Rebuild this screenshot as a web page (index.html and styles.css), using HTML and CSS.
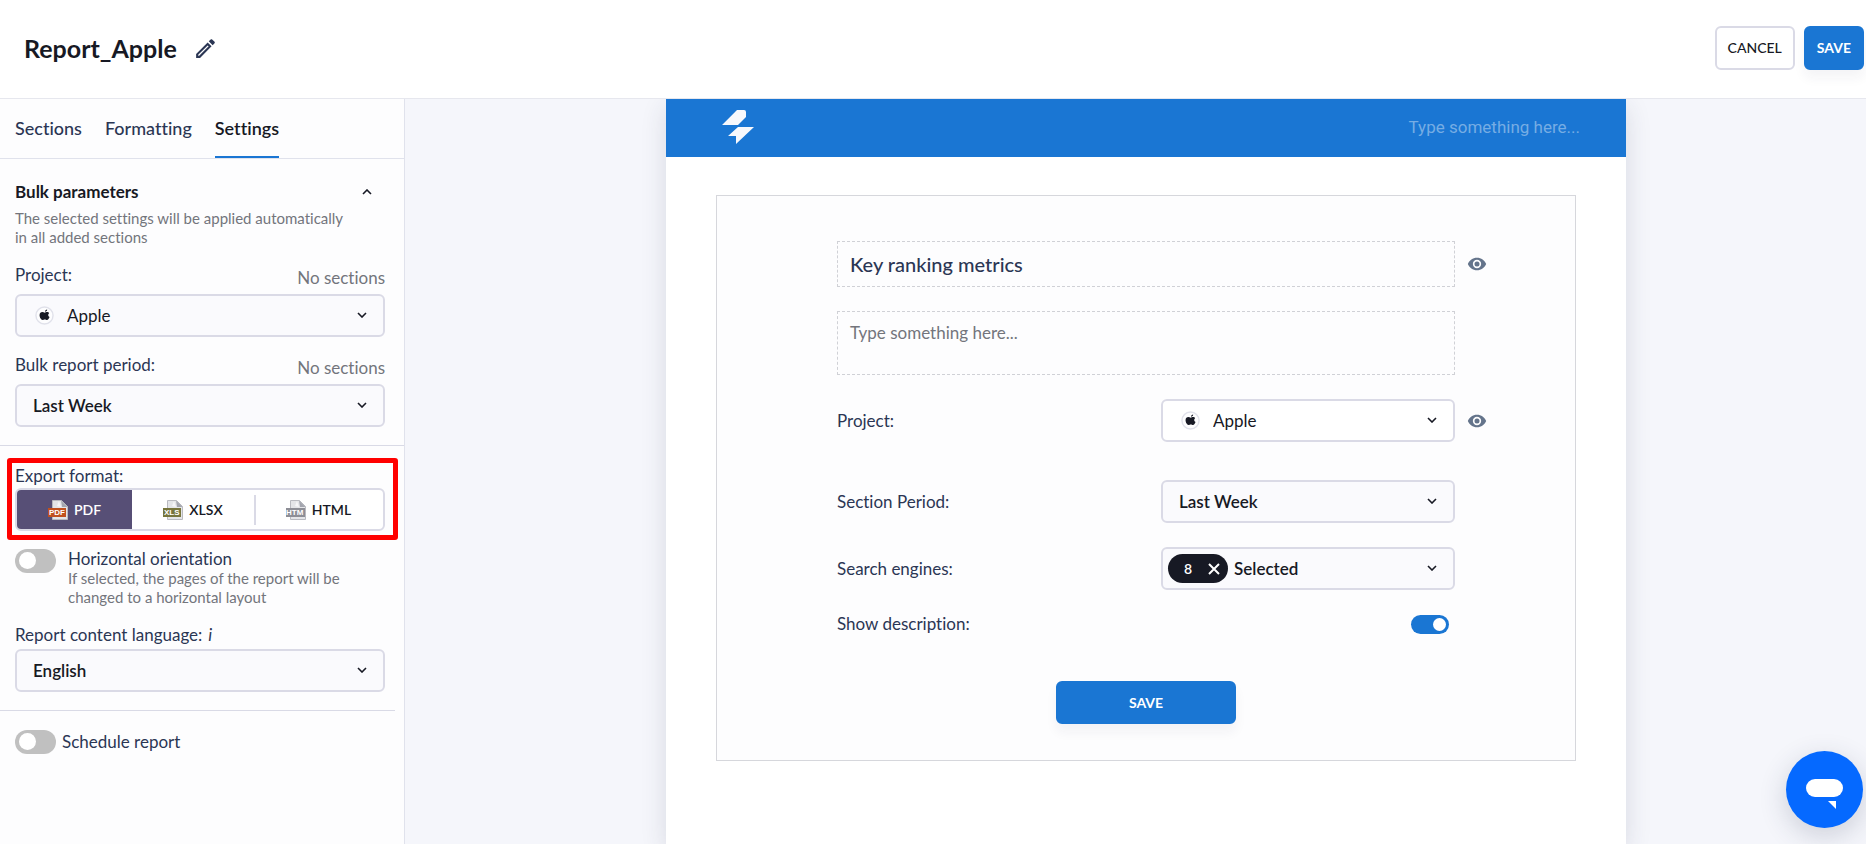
FILE: index.html
```html
<!doctype html>
<html lang="en">
    <head>
        <meta charset="utf-8" />
        <meta name="viewport" content="width=device-width" />
        <title>Report_Apple</title>
        <link rel="stylesheet" href="styles.css">
    </head>
    <body>
        <svg class="sprite" aria-hidden="true">
            <symbol id="chevron" viewBox="0 0 10 6">
                <path d="M1 1l4 4 4-4" fill="none" stroke="#171924" stroke-width="1.600" />
            </symbol>
            <symbol id="eye" viewBox="0 0 24 24">
                <path fill="#64748b" d="M12 4.5C7 4.5 2.7 7.6 1 12c1.700 4.400 6 7.500 11 7.500s9.300-3.100 11-7.500c-1.700-4.400-6-7.500-11-7.500zM12 17a5 5 0 1 1 0-10 5 5 0 0 1 0 10zm0-8a3 3 0 1 0 0 6 3 3 0 0 0 0-6z" />
            </symbol>
            <symbol id="apple" viewBox="0 0 20 20">
                <circle cx="10" cy="10" r="9" fill="#fdfdfe" stroke="#e0e1ea" stroke-width="1.500" />
                <path fill="#171924" d="M12.800 3.700c.1 1.300-1 2.400-2.300 2.400-.1-1.200 1-2.300 2.300-2.400zM14.900 7.700c-1.500.9-1.300 3.200.4 3.900-.5 1.500-1.500 3.100-2.700 3.100-.8 0-1.300-.5-2.300-.5s-1.500.5-2.300.5C6.300 14.700 4.800 12 4.800 9.800c0-2.200 1.400-3.400 2.900-3.400.9 0 1.800.6 2.500.6s1.600-.7 2.800-.6c.8 0 1.500.5 1.900 1.300z" />
            </symbol>
            <symbol id="sheet" viewBox="0 0 20 20">
                <path fill="#e4e5e8" stroke="#b9bac0" stroke-width="1" d="M4.500.5h9l6 6v13h-15z" />
                <path fill="#a3a5ae" d="M13 .5l6.500 6.500H14z" />
                <path fill="#f6f6f8" d="M11 1l2 6-4-1z" />
            </symbol>
        </svg>

        <header class="topbar">
            <h1>Report_Apple</h1>
            <button class="icon_button" aria-label="Rename report">
                <svg width="25" height="25" viewBox="0 0 24 24">
                    <path fill="#2b3654" d="M14.060 9l.94.94L5.920 19H5v-.92L14.060 9m3.600-6c-.25 0-.51.1-.7.29l-1.830 1.830 3.750 3.750 1.830-1.830c.39-.39.39-1.040 0-1.410l-2.340-2.340c-.2-.2-.45-.29-.71-.29m-3.600 3.190L3 17.250V21h3.750L17.810 9.940l-3.750-3.750z" />
                </svg>
            </button>
            <div class="actions">
                <button class="button">CANCEL</button>
                <button class="button primary">SAVE</button>
            </div>
        </header>

        <div class="layout">
            <aside class="sidebar">
                <nav class="tabs">
                    <a href="#sections">Sections</a>
                    <a href="#formatting">Formatting</a>
                    <a href="#settings" class="active">Settings</a>
                </nav>

                <section class="group bulk">
                    <div class="group_title">
                        <h2>Bulk parameters</h2>
                        <button class="icon_button" aria-label="Collapse">
                            <svg class="chevron up"><use href="#chevron" /></svg>
                        </button>
                    </div>
                    <p class="hint">The selected settings will be applied automatically in all added sections</p>

                    <div class="field_head">
                        <label for="bulk_project">Project:</label>
                        <span class="note">No sections</span>
                    </div>
                    <div class="select with_icon">
                        <svg class="favicon"><use href="#apple" /></svg>
                        <select id="bulk_project"><option>Apple</option></select>
                        <svg class="chevron"><use href="#chevron" /></svg>
                    </div>

                    <div class="field_head">
                        <label for="bulk_period">Bulk report period:</label>
                        <span class="note">No sections</span>
                    </div>
                    <div class="select">
                        <select id="bulk_period"><option>Last Week</option></select>
                        <svg class="chevron"><use href="#chevron" /></svg>
                    </div>
                </section>

                <section class="group export">
                    <div class="highlighted">
                        <span id="format_label">Export format:</span>
                        <div class="formats" role="group" aria-labelledby="format_label">
                            <button class="format active" aria-pressed="true">
                                <svg width="20" height="20" viewBox="0 0 20 20">
                                    <use href="#sheet" />
                                    <rect y="8" width="18" height="9" fill="#c0501f" />
                                    <text class="file_type" x="1" y="15">PDF</text>
                                </svg>
                                PDF
                            </button>
                            <button class="format" aria-pressed="false">
                                <svg width="20" height="20" viewBox="0 0 20 20">
                                    <use href="#sheet" />
                                    <rect y="8" width="18" height="9" fill="#77753c" />
                                    <text class="file_type" x="1" y="15">XLS</text>
                                </svg>
                                XLSX
                            </button>
                            <button class="format" aria-pressed="false">
                                <svg width="20" height="20" viewBox="0 0 20 20">
                                    <use href="#sheet" />
                                    <rect y="8" width="19" height="9" fill="#8d8e96" />
                                    <text class="file_type" x="0" y="15">HTM</text>
                                </svg>
                                HTML
                            </button>
                        </div>
                    </div>

                    <div class="switch_row">
                        <input type="checkbox" id="horizontal" class="switch" />
                        <div>
                            <label for="horizontal">Horizontal orientation</label>
                            <p class="hint">If selected, the pages of the report will be changed to a horizontal layout</p>
                        </div>
                    </div>

                    <div class="field_head language">
                        <label for="language">Report content language:</label>
                        <em>i</em>
                    </div>
                    <div class="select">
                        <select id="language"><option>English</option></select>
                        <svg class="chevron"><use href="#chevron" /></svg>
                    </div>
                </section>

                <section class="group schedule">
                    <input type="checkbox" id="schedule" class="switch" />
                    <label for="schedule">Schedule report</label>
                </section>
            </aside>

            <main class="canvas">
                <div class="page">
                    <div class="page_header">
                        <svg width="32" height="36" viewBox="0 0 32 36">
                            <path fill="#f7f8fc" d="M15 1h7q2 0 2 2v5l-8 8H0zM16 18h16L14 35v-8H6z" />
                        </svg>
                        <input type="text" aria-label="Header text" placeholder="Type something here..." />
                    </div>
                    <div class="card">
                        <div class="row heading">
                            <input type="text" class="dashed" aria-label="Section title" value="Key ranking metrics" />
                            <button class="icon_button visibility" aria-label="Toggle title">
                                <svg width="20" height="20"><use href="#eye" /></svg>
                            </button>
                        </div>
                        <textarea class="dashed" aria-label="Section text" placeholder="Type something here..."></textarea>
                        <div class="row project">
                            <label for="project">Project:</label>
                            <div class="select with_icon plain">
                                <svg class="favicon"><use href="#apple" /></svg>
                                <select id="project"><option>Apple</option></select>
                                <svg class="chevron"><use href="#chevron" /></svg>
                            </div>
                            <button class="icon_button visibility" aria-label="Toggle project">
                                <svg width="20" height="20"><use href="#eye" /></svg>
                            </button>
                        </div>
                        <div class="row period">
                            <label for="period">Section Period:</label>
                            <div class="select">
                                <select id="period"><option>Last Week</option></select>
                                <svg class="chevron"><use href="#chevron" /></svg>
                            </div>
                        </div>
                        <div class="row engines">
                            <label for="engines">Search engines:</label>
                            <div class="select with_count">
                                <button class="count" aria-label="Clear 8 selected">
                                    8
                                    <svg width="12" height="12" viewBox="0 0 12 12">
                                        <path d="M1 1l10 10M11 1L1 11" stroke="#fff" stroke-width="2" />
                                    </svg>
                                </button>
                                <select id="engines"><option>Selected</option></select>
                                <svg class="chevron"><use href="#chevron" /></svg>
                            </div>
                        </div>
                        <div class="row description">
                            <label for="description">Show description:</label>
                            <input type="checkbox" id="description" class="switch small" checked />
                        </div>
                        <button class="button primary save">SAVE</button>
                    </div>
                </div>
            </main>
        </div>

        <button class="chat" aria-label="Open chat">
            <svg width="37" height="30" viewBox="0 0 37 30">
                <rect width="37" height="18" rx="9" fill="#fff" />
                <path d="M22 22h8v8z" fill="#fff" />
            </svg>
        </button>
    </body>
</html>
```
FILE: styles.css
```css
* {
    box-sizing: border-box;
}
body {
    display: flex;
    flex-direction: column;
    min-height: 100vh;
    margin: 0;
    background: #fff;
    color: #2b3654;
    font: 17px/20px Lato, "Noto Sans", sans-serif;
    font-variant-ligatures: none;
}
h1,
h2,
p {
    margin: 0;
}
button,
input,
select,
textarea {
    margin: 0;
    font: inherit;
    color: inherit;
}
.sprite {
    position: absolute;
    width: 0;
    height: 0;
}
.icon_button {
    display: flex;
    padding: 0;
    border: 0;
    background: none;
}

/* top bar */
.topbar {
    display: flex;
    align-items: center;
    height: 99px;
    padding: 0 2px 2px 24px;
    border-bottom: 1px solid #e6e7ee;
}
.topbar h1 {
    margin-right: 16px;
    color: #171924;
    font-size: 25px;
    line-height: 32px;
    font-weight: 700;
}
.actions {
    display: flex;
    gap: 9px;
    margin-left: auto;
}
.button {
    height: 44px;
    padding: 0 11px;
    border: 2px solid #dadae6;
    border-radius: 6px;
    background: #fff;
    color: #171924;
    font-size: 14px;
    font-weight: 500;
}
.primary {
    border-color: #1a76d3;
    background: #1a76d3;
    color: #fff;
    font-weight: 700;
    box-shadow: 0 8px 12px rgba(30, 40, 80, 0.05);
}

.layout {
    display: flex;
    flex: 1;
}

/* sidebar */
.sidebar {
    width: 405px;
    flex: none;
    border-right: 1px solid #e0e2ec;
    background: #fdfdfe;
}
.tabs {
    display: flex;
    gap: 23px;
    height: 60px;
    padding: 0 15px;
    border-bottom: 1px solid #e0e2ec;
}
.tabs a {
    padding-top: 19px;
    color: inherit;
    font-size: 18px;
    font-weight: 500;
    text-decoration: none;
}
.tabs .active {
    border-bottom: 2px solid #1a76d3;
    color: #171924;
    font-weight: 600;
}
.group {
    padding: 0 19px 0 15px;
}
.bulk {
    padding-top: 23px;
    padding-bottom: 18px;
    border-bottom: 1px solid #d9dae6;
}
.group_title {
    display: flex;
    align-items: center;
    justify-content: space-between;
    padding-right: 13px;
}
.group_title h2 {
    color: #171924;
    font-size: 17px;
    line-height: 20px;
    font-weight: 700;
}
.hint {
    color: #73757c;
    font-size: 15px;
    line-height: 19px;
}
.group_title + .hint {
    max-width: 334px;
    margin: 7px 0 18px;
}
.field_head {
    display: flex;
    justify-content: space-between;
    padding-bottom: 9px;
}
.select + .field_head {
    padding-top: 18px;
}
.note {
    margin: 3px 0 -3px;
    color: #73757c;
}
.select {
    position: relative;
}
.select select {
    display: block;
    width: 100%;
    height: 43px;
    padding: 0 40px 0 16px;
    border: 2px solid #dadae6;
    border-radius: 6px;
    background: #fafafd;
    color: #171924;
    font-weight: 600;
    appearance: none;
}
.with_icon select {
    padding-left: 50px;
    font-weight: 400;
}
.plain select {
    background: #fff;
}
.chevron {
    width: 10px;
    height: 6px;
}
.select .chevron {
    position: absolute;
    top: 18px;
    right: 18px;
    pointer-events: none;
}
.up {
    transform: rotate(180deg);
}
.favicon {
    position: absolute;
    top: 12px;
    left: 20px;
    width: 19px;
    height: 19px;
}
.export {
    position: relative;
    padding-top: 20px;
    padding-bottom: 19px;
}
/* the rule stops short of the sidebar edge */
.export::after {
    content: "";
    position: absolute;
    bottom: 0;
    left: 0;
    right: 9px;
    border-bottom: 1px solid #d9dae6;
}
.highlighted {
    position: relative;
}
.highlighted::after {
    content: "";
    position: absolute;
    inset: -8px -13px -9px -8px;
    border: 5px solid #f00;
    border-radius: 3px;
    pointer-events: none;
}
.formats {
    display: grid;
    grid-template-columns: 115px 122px 1fr;
    height: 43px;
    margin-top: 2px;
    border: 2px solid #dadae6;
    border-radius: 6px;
    background: #fff;
}
.format {
    display: flex;
    align-items: center;
    justify-content: center;
    gap: 6px;
    padding: 0;
    border: 0;
    background: none;
    color: #171924;
    font-size: 14px;
    font-weight: 600;
}
.format.active {
    border-radius: 4px 0 0 4px;
    background: #574f76;
    color: #fff;
}
.format:last-child {
    position: relative;
}
.format:last-child::before {
    content: "";
    position: absolute;
    top: 5px;
    bottom: 4px;
    left: 0;
    border-left: 2px solid #dadae6;
}
.file_type {
    fill: #fff;
    font: bold 8px/8px "Liberation Sans", sans-serif;
}
.switch {
    position: relative;
    flex: none;
    width: 41px;
    height: 24px;
    border-radius: 12px;
    background: #c0c0c0;
    appearance: none;
}
.switch::before {
    content: "";
    position: absolute;
    top: 3px;
    left: 4px;
    width: 17px;
    height: 17px;
    border-radius: 50%;
    background: #fff;
}
.switch:checked {
    background: #1a76d3;
}
.small {
    width: 38px;
    height: 19px;
}
.small::before {
    top: 3px;
    left: 22px;
    width: 13px;
    height: 13px;
}
.switch_row {
    display: flex;
    gap: 12px;
    margin-top: 18px;
}
.switch_row label {
    display: block;
}
.switch_row .hint {
    max-width: 290px;
}
.language {
    justify-content: flex-start;
    gap: 6px;
    margin-top: 18px;
    padding-bottom: 4px;
}
.schedule {
    display: flex;
    align-items: center;
    gap: 6px;
    padding-top: 19px;
}

/* report page */
.canvas {
    display: flex;
    flex: 1;
    justify-content: center;
    padding-left: 21px;
    overflow: hidden;
    background: #f5f6fb;
}
.page {
    width: 960px;
    background: #fff;
    box-shadow: 0 8px 24px rgba(40, 50, 80, 0.14);
}
.page_header {
    display: flex;
    align-items: center;
    justify-content: space-between;
    height: 58px;
    padding: 0 46px 2px 56px;
    background: #1a76d3;
}
.page_header input {
    width: 300px;
    padding: 0;
    border: 0;
    background: none;
    color: #fff;
    font-family: Roboto, sans-serif;
    text-align: right;
}
.page_header input::placeholder {
    color: #76ade4;
}
.card {
    margin: 38px 50px;
    padding: 45px 120px 36px;
    border: 1px solid #d6d7dc;
    background: #fdfdfe;
}
.row {
    display: flex;
    position: relative;
    align-items: center;
    justify-content: space-between;
}
.row .select {
    width: 294px;
}
.visibility {
    position: absolute;
    right: -32px;
}
.dashed {
    display: block;
    width: 100%;
    padding: 0 12px;
    border: 1px dashed #d0d1d6;
    background: none;
    resize: none;
}
.heading .dashed {
    height: 46px;
    font-size: 20px;
    font-weight: 500;
}
textarea.dashed {
    height: 64px;
    margin: 24px 0;
    padding-top: 11px;
}
.dashed::placeholder {
    color: #73757c;
}
.period {
    margin: 38px 0 24px;
}
.with_count select {
    padding-left: 71px;
}
.count {
    display: flex;
    position: absolute;
    top: 7px;
    left: 7px;
    align-items: center;
    justify-content: space-between;
    width: 60px;
    height: 29px;
    padding: 0 8px 0 16px;
    border: 0;
    border-radius: 15px;
    background: #171924;
    color: #fff;
    font-size: 14px;
    font-weight: 600;
}
.description {
    margin: 24px 0 47px;
    padding-right: 6px;
}
.save {
    display: block;
    width: 180px;
    height: 43px;
    margin: 0 auto;
}

.chat {
    display: flex;
    position: fixed;
    right: 3px;
    bottom: 16px;
    justify-content: center;
    width: 77px;
    height: 77px;
    padding: 28px 0 0;
    border: 0;
    border-radius: 50%;
    background: #0569ff;
    box-shadow: 0 8px 28px rgba(40, 50, 80, 0.2);
}
```
